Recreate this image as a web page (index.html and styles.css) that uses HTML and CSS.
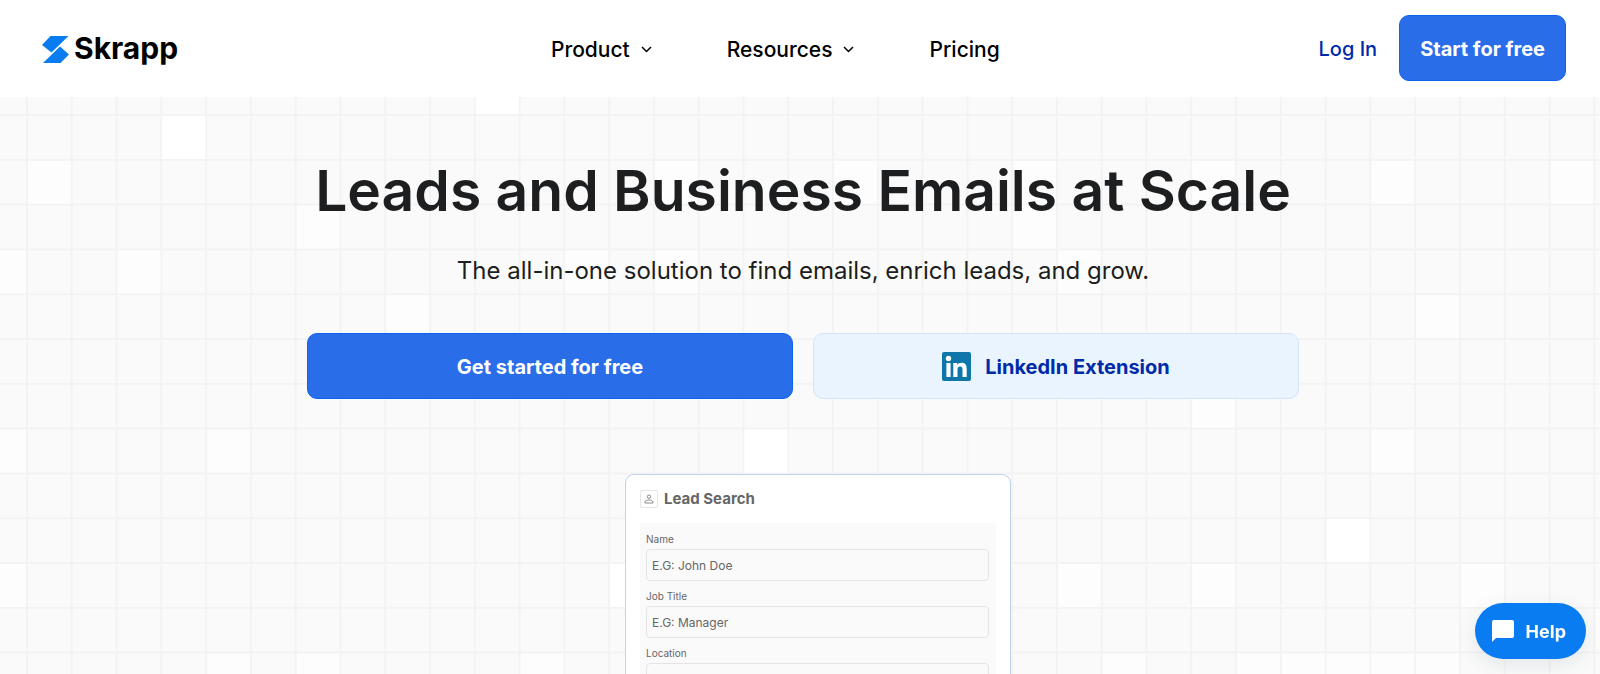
FILE: index.html
```html
<!DOCTYPE html>
<html lang="en">
<head>
    <meta charset="UTF-8">
    <meta name="viewport" content="width=device-width, initial-scale=1.0">
    <title>Skrapp - Leads and Business Emails at Scale</title>
    <link rel="stylesheet" href="styles.css">
</head>
<body>
    <header class="header">
        <a class="logo" href="#">
            <svg width="27" height="27" viewBox="0 0 27 27" aria-hidden="true">
                <path fill="#087cf0" d="M8.500 0H26.500L9.500 16.500 0 9z"/>
                <path fill="#087cf0" d="M18 10.500l9 8-8.500 8.500H1z"/>
            </svg>
            <span>Skrapp</span>
        </a>
        <nav class="nav">
            <a href="#">Product
                <svg class="chevron" width="11" height="7" viewBox="0 0 11 7" aria-hidden="true"><path d="M1 1l4.500 4.500L10 1"/></svg>
            </a>
            <a href="#">Resources
                <svg class="chevron" width="11" height="7" viewBox="0 0 11 7" aria-hidden="true"><path d="M1 1l4.500 4.500L10 1"/></svg>
            </a>
            <a href="#">Pricing</a>
        </nav>
        <div class="account">
            <a class="login" href="#">Log In</a>
            <button class="btn btn-primary" type="button">Start for free</button>
        </div>
    </header>

    <main class="hero">
        <!-- Grid backdrop: lines plus a few lit squares -->
        <svg class="backdrop" aria-hidden="true">
            <defs>
                <pattern id="grid" x="26" y="17" width="44.78" height="44.8" patternUnits="userSpaceOnUse">
                    <path d="M0 1H45M1 0V45" stroke="#f3f3f3" stroke-width="2" fill="none"/>
                </pattern>
            </defs>
            <rect width="100%" height="100%" fill="url(#grid)"/>
            <g id="cells" transform="translate(28 19)"></g>
        </svg>

        <div class="hero-content">
            <h1>Leads and Business Emails at Scale</h1>
            <p class="subtitle">The all-in-one solution to find emails, enrich leads, and grow.</p>
            <div class="actions">
                <button class="btn btn-primary" type="button">Get started for free</button>
                <button class="btn btn-light" type="button">
                    <svg width="29" height="29" viewBox="0 0 29 29" aria-hidden="true">
                        <rect width="29" height="29" rx="2" fill="#0e76a8"/>
                        <circle cx="6.500" cy="6.500" r="2.700" fill="#fff"/>
                        <path fill="#fff" d="M4.400 11h4.200v14H4.400zM11.300 11h4v2c.8-1.400 2.200-2.300 4.200-2.300 4.200 0 5.200 2.700 5.200 6.500V25h-4.200v-7c0-1.900-.3-3.600-2.400-3.600s-2.600 1.700-2.600 3.600v7h-4.200z"/>
                    </svg>
                    <span>LinkedIn Extension</span>
                </button>
            </div>

            <form class="card">
                <div class="card-title">
                    <span class="card-icon">
                        <svg width="10" height="10" viewBox="0 0 10 10" aria-hidden="true">
                            <circle cx="5" cy="2.700" r="1.700"/>
                            <path d="M1 9V8c0-1.200 2-2 4-2s4 .8 4 2v1z"/>
                        </svg>
                    </span>
                    <h2>Lead Search</h2>
                </div>
                <div class="fields">
                    <label for="name">Name</label>
                    <input id="name" type="text" placeholder="E.G: John Doe">
                    <label for="job">Job Title</label>
                    <input id="job" type="text" placeholder="E.G: Manager">
                    <label for="location">Location</label>
                    <input id="location" type="text" placeholder="E.G: New York">
                </div>
            </form>
        </div>
    </main>

    <button class="help" type="button">
        <svg width="22" height="22" viewBox="0 0 22 22" aria-hidden="true">
            <path fill="#fff" d="M2 0h18a2 2 0 0 1 2 2v14a2 2 0 0 1-2 2H4l-4 4V2a2 2 0 0 1 2-2z"/>
        </svg>
        Help
    </button>

    <script src="script.js"></script>
</body>
</html>
```
FILE: styles.css
```css
* {
    box-sizing: border-box;
}
body {
    margin: 0;
    height: 100vh;
    overflow: hidden;
    display: flex;
    flex-direction: column;
    font-family: Inter, "Liberation Sans", sans-serif;
    background-color: #fafafa;
    color: #1c1e20;
}
a {
    color: inherit;
    text-decoration: none;
}
.header {
    flex: none;
    display: flex;
    justify-content: space-between;
    align-items: center;
    padding: 15px 34px 16px 42px;
    background-color: #fff;
    color: #000;
}
.logo {
    display: flex;
    align-items: center;
    gap: 5px;
    padding-top: 2px;
    font-size: 30px;
    line-height: 32px;
    font-weight: 700;
}
.logo span {
    padding-bottom: 2px;
}
.nav {
    display: flex;
    gap: 75px;
    padding: 2px 0 0 54px;
    font-size: 21px;
    font-weight: 500;
}
.nav a {
    display: flex;
    align-items: center;
    gap: 11px;
}
.chevron path {
    fill: none;
    stroke: #000;
    stroke-width: 1.5;
}
.account {
    display: flex;
    align-items: center;
    gap: 22px;
}
.login {
    padding-top: 2px;
    color: #002aa8;
    font-size: 20px;
    font-weight: 500;
}
.btn {
    height: 66px;
    padding: 2px 20px 0;
    display: flex;
    justify-content: center;
    align-items: center;
    gap: 14px;
    border: 1px solid #0d62ee;
    border-radius: 10px;
    font-family: inherit;
    font-size: 20px;
    font-weight: 700;
    cursor: pointer;
}
.btn-primary {
    background-color: #2a6de9;
    color: #fff;
}
.btn-light {
    padding-top: 0;
    background-color: #eaf4ff;
    border-color: #d3e3fc;
    color: #002aa8;
}
.btn-light span {
    padding-top: 2px;
}
.hero {
    flex: 1;
    min-height: 0;
    display: grid;
    grid-template: minmax(0, 1fr) / minmax(0, 1fr);
    overflow: hidden;
}
.backdrop,
.hero-content {
    grid-area: 1 / 1;
}
.backdrop {
    width: 100%;
    height: 100%;
}
.hero-content {
    position: relative;
    display: flex;
    flex-direction: column;
    align-items: center;
    padding: 56px 24px 0 30px;
}
h1 {
    margin: 0;
    font-size: 57px;
    line-height: 76px;
    font-weight: 600;
    text-align: center;
}
.subtitle {
    margin: 24px 0 0;
    font-size: 24px;
    line-height: 36px;
    text-align: center;
}
.actions {
    width: 100%;
    max-width: 992px;
    margin-top: 44px;
    display: grid;
    grid-template-columns: 1fr 1fr;
    gap: 20px;
}
.card {
    width: 100%;
    max-width: 386px;
    margin: 75px 0 0 30px;
    padding: 15px 14px;
    background-color: #fff;
    border: 1px solid #bdd3ef;
    border-radius: 9px;
    color: #666;
}
.card-title {
    display: flex;
    align-items: center;
    gap: 6px;
}
.card-icon {
    width: 18px;
    height: 18px;
    display: flex;
    justify-content: center;
    align-items: center;
    border: 1px solid #e6e6e6;
    border-radius: 2px;
}
.card-icon svg {
    fill: none;
    stroke: #888;
}
h2 {
    margin: 0;
    font-size: 15px;
    line-height: 18px;
    font-weight: 700;
}
.fields {
    margin-top: 15px;
    padding: 9px 7px 8px 6px;
    background-color: #fafafa;
    display: flex;
    flex-direction: column;
}
.fields label {
    font-size: 10px;
    line-height: 14px;
    margin-bottom: 3px;
}
.fields input {
    height: 32px;
    margin-bottom: 8px;
    padding: 0 5px;
    border: 1px solid #e4e4e6;
    border-radius: 4px;
    background-color: #fafafa;
    font-family: inherit;
    font-size: 12px;
    color: #666;
}
.fields input::placeholder {
    color: #666;
}
.help {
    position: fixed;
    right: 14px;
    bottom: 15px;
    height: 56px;
    padding: 0 20px 0 17px;
    display: flex;
    align-items: center;
    gap: 12px;
    border: none;
    border-radius: 28px;
    background-color: #087cf0;
    color: #fff;
    box-shadow: 0 6px 20px rgba(23, 73, 77, 0.1);
    font-family: inherit;
    font-size: 18px;
    font-weight: 700;
    cursor: pointer;
}
```
FILE: script.js
```js
const cells = document.getElementById('cells');

// [column, row, opacity]
const lit = [
    [10, -1, 1], [3, 0, 1], [16, 7, 1], [29, 9, 1],
    [0, 1, 0.6], [14, 1, 0.6], [18, 1, 0.6], [22, 1, 0.6], [26, 1, 0.6], [30, 1, 0.6], [34, 1, 0.6],
    [6, 2, 0.6], [22, 2, 0.6],
    [-1, 3, 0.6], [2, 3, 0.6], [12, 3, 0.6], [14, 3, 0.6], [23, 3, 0.6],
    [8, 4, 0.6], [31, 4, 0.6], [26, 6, 0.6],
    [-1, 7, 0.6], [4, 7, 0.6], [30, 7, 0.6],
    [-1, 10, 0.6], [13, 10, 0.9], [23, 10, 0.6], [26, 10, 0.6], [32, 10, 0.6], [35, 11, 0.6],
    [4, 12, 0.6], [6, 12, 0.6], [11, 12, 0.6], [24, 12, 0.6],
    [27, 12, 0.6], [28, 12, 0.6], [29, 12, 0.6], [30, 12, 0.6], [31, 12, 0.6]
];

lit.forEach(([col, row, opacity]) => {
    const rect = document.createElementNS('http://www.w3.org/2000/svg', 'rect');
    rect.setAttribute('x', col * 44.78);
    rect.setAttribute('y', row * 44.8);
    rect.setAttribute('width', 43);
    rect.setAttribute('height', 43);
    rect.setAttribute('fill', '#fff');
    rect.setAttribute('fill-opacity', opacity);
    cells.appendChild(rect);
});
```
